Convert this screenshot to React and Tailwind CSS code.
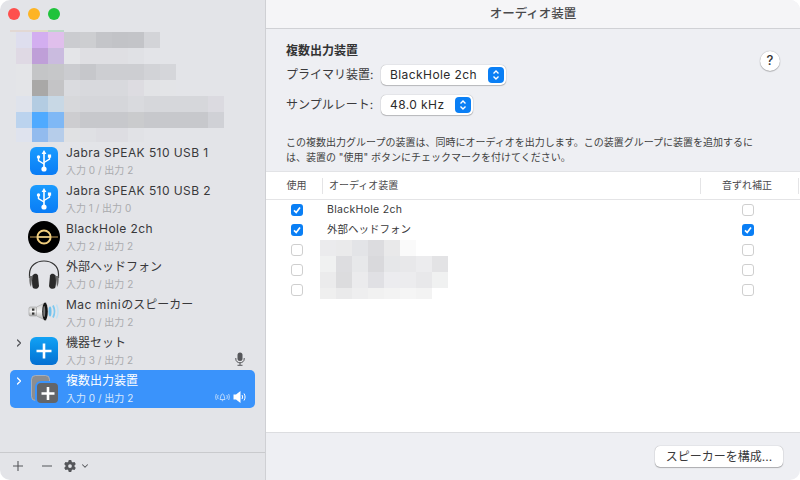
import React from "react";
import { FaGear } from "react-icons/fa6";
import { ChevronDown, ChevronRight } from "lucide-react";

const FONT = "font-['Inter','Noto_Sans_CJK_JP',sans-serif]";

// pixelated (blurred out) blocks in the reference, one class per 16px cell
const sideMosaic = [
  ["bg-[#dedeee]", "bg-[#d3aef0]", "bg-[#e0bfec]", "bg-[#cbccd0]", "bg-[#cdced1]", "bg-[#c4c5c9]", "bg-[#c2c3c7]", "bg-[#c3c4c8]", "bg-[#d3d4d8]"],
  ["bg-[#dfd9e4]", "bg-[#bf9fd8]", "bg-[#cabbdf]", "bg-[#e4e5e8]", "bg-[#dfdfe3]", "bg-[#dfdfe3]", "bg-[#dfdfe3]", "bg-[#e0e1e5]"],
  ["bg-[#e4e5e8]", "bg-[#c4c5c7]", "bg-[#c6c7c9]", "bg-[#cbccd0]", "bg-[#c6c7cb]", "bg-[#cdced2]", "bg-[#cdced2]", "bg-[#cdced2]", "bg-[#d2d3d7]", "bg-[#d5d6da]"],
  ["bg-[#e4e5e8]", "bg-[#a9a8a7]", "bg-[#c4c4c6]", "bg-[#dadbdf]", "bg-[#d8d9dd]", "bg-[#d8d9dd]", "bg-[#d8d9dd]", "bg-[#dddce1]", "bg-[#e2e3e6]", "bg-[#e3e4e7]"],
  ["bg-[#dfe3ec]", "bg-[#b3cce2]", "bg-[#c8d8e5]", "bg-[#d7d8db]", "bg-[#d5d6da]", "bg-[#d5d6da]", "bg-[#d5d6da]", "bg-[#d9dade]", "bg-[#d6d7db]", "bg-[#d6d7db]", "bg-[#d6d7db]", "bg-[#d6d7db]", "bg-[#dbdae0]"],
  ["bg-[#bbd3ee]", "bg-[#4faaff]", "bg-[#7fb8f5]", "bg-[#cdcdd0]", "bg-[#c7c8cc]", "bg-[#c7c8cc]", "bg-[#c7c8cc]", "bg-[#cacbcd]", "bg-[#c7c8cc]", "bg-[#c7c8cc]", "bg-[#c7c8cc]", "bg-[#c7c8cc]", "bg-[#d0d1d6]"],
  ["bg-[#dfe3ee]", "bg-[#92bbee]", "bg-[#b6cdea]", "bg-[#e0e1e3]", "bg-[#dfe0e4]", "bg-[#dddde2]", "bg-[#dddde2]", "bg-[#e1e2e6]"],
];

const tableMosaic = [
  ["bg-[#ebebed]", "bg-[#eaeaeb]", "bg-[#e3e4e7]", "bg-[#dcdcdf]", "bg-[#e9e9ea]", "bg-[#fafafa]"],
  ["bg-[#f0f1f1]", "bg-[#dddde0]", "bg-[#e7e8ea]", "bg-[#d9d9dc]", "bg-[#e6e7e9]", "bg-[#e8e8ea]", "bg-[#ececee]", "bg-[#e3e3e5]"],
  ["bg-[#ebebec]", "bg-[#dcdcde]", "bg-[#ebebed]", "bg-[#e0e0e4]", "bg-[#ececef]", "bg-[#ececee]", "bg-[#e8e8ea]", "bg-[#f0f1f1]"],
  ["bg-[#efefef]", "bg-[#eaeaeb]", "bg-[#eeeeef]", "bg-[#f1f1f1]", "bg-[#f3f3f3]", "bg-[#f5f5f5]", "bg-[#f3f3f3]"],
];

const UsbIcon = () => (
  <div className="w-[28px] h-[28px] rounded-[6px] bg-gradient-to-b from-[#1a9bff] to-[#0a7cf5] flex items-center justify-center">
    <svg width="18" height="24" viewBox="0 0 18 24" fill="none">
      <path d="M9 1 L11.4 5 H6.6 Z" fill="#fff" />
      <path d="M9 4 V20" stroke="#fff" strokeWidth="1.6" />
      <circle cx="9" cy="20" r="2.6" fill="#fff" />
      <path d="M3.5 9 V11.5 L9 15" stroke="#fff" strokeWidth="1.4" />
      <path d="M14.5 8 V10 L9 13.5" stroke="#fff" strokeWidth="1.4" />
      <circle cx="3.5" cy="8" r="1.7" fill="#fff" />
      <rect x="12.9" y="5.5" width="3.2" height="3.2" fill="#fff" />
    </svg>
  </div>
);

const BlackHoleIcon = () => (
  <svg width="32" height="32" viewBox="0 0 32 32">
    <circle cx="16" cy="16" r="16" fill="#000" />
    <circle cx="16" cy="16" r="6.6" fill="none" stroke="#f2cf7e" strokeWidth="2" />
    <path d="M2 16 H30" stroke="#c9a35c" strokeWidth="1" />
    <path d="M9 16 H23" stroke="#f6d88e" strokeWidth="1.6" />
  </svg>
);

const HeadphonesIcon = () => (
  <svg width="32" height="30" viewBox="0 0 32 30" fill="none">
    <path d="M1.500 18 V14 C1.500 6 8 1 16 1 C24 1 30.500 6 30.500 14 V18" stroke="#333" strokeWidth="1.200" />
    <path d="M1.500 16 C1 20 1.500 25 3 27 L4.500 16 Z" fill="#6a6a6a" />
    <path d="M30.500 16 C31 20 30.500 25 29 27 L27.500 16 Z" fill="#6a6a6a" />
    <path d="M4.500 15.500 C6 13.500 9 13 10 15.500 L11 26 C10.500 29 6.500 29.500 5 28 C3.800 26 3.800 20 4.500 15.500 Z" fill="#2a2a2a" />
    <path d="M27.500 15.500 C26 13.500 23 13 22 15.500 L21 26 C21.500 29 25.500 29.500 27 28 C28.200 26 28.200 20 27.500 15.500 Z" fill="#2a2a2a" />
  </svg>
);

const SpeakerIcon = () => (
  <svg width="32" height="20" viewBox="0 0 32 20" fill="none" className="mb-[2px]">
    <defs>
      <linearGradient id="spk" x1="0" y1="0" x2="0" y2="1">
        <stop offset="0" stopColor="#c9c9c9" />
        <stop offset="0.5" stopColor="#f4f4f4" />
        <stop offset="1" stopColor="#a8a8a8" />
      </linearGradient>
    </defs>
    <rect x="1" y="5" width="8" height="9" rx="1.500" fill="url(#spk)" stroke="#9c9c9c" strokeWidth="0.6" />
    <rect x="4" y="6.500" width="2.400" height="2.200" fill="#333" />
    <rect x="4" y="10.500" width="2.400" height="2.200" fill="#333" />
    <path d="M8.500 5 L18 0.500 V18.500 L8.500 14 Z" fill="url(#spk)" stroke="#9c9c9c" strokeWidth="0.5" />
    <ellipse cx="17" cy="9.500" rx="2.800" ry="9" fill="#151515" />
    <ellipse cx="16.200" cy="9.500" rx="1" ry="5.500" fill="#7a7a7a" />
    <ellipse cx="22" cy="9.500" rx="1.500" ry="5" fill="#6fc0ec" />
    <path d="M25 3.500 C26.800 7 26.800 12 25 15.500" stroke="#7fc9f0" strokeWidth="1.800" />
    <path d="M28.500 2.500 C30.500 7 30.500 12 28.500 16.500" stroke="#bfe2f5" strokeWidth="1.500" />
  </svg>
);

const PlusTile = () => (
  <div className="w-[28px] h-[28px] rounded-[6px] bg-gradient-to-b from-[#12a2f5] to-[#0670d2] flex items-center justify-center">
    <svg width="18" height="18" viewBox="0 0 18 18">
      <path d="M9 1.500 V16.500 M1.500 9 H16.500" stroke="#fff" strokeWidth="2.6" />
    </svg>
  </div>
);

const MultiTile = () => (
  <svg width="30" height="30" viewBox="0 0 30 30">
    <rect x="2.500" y="1.500" width="18" height="25" rx="4" fill="#8b8d90" stroke="#b4b7bd" strokeWidth="0.8" />
    <rect x="7" y="8" width="23" height="22" rx="5" fill="#636568" stroke="#3a93fb" strokeWidth="2" />
    <path d="M19 13 V26 M12.500 19.500 H25.500" stroke="#fff" strokeWidth="2.600" />
  </svg>
);

const MicIcon = () => (
  <svg width="10" height="14" viewBox="0 0 10 14" fill="none">
    <rect x="2.500" y="0.500" width="5" height="8.500" rx="2.500" fill="#55565a" />
    <path d="M0.800 6 V7 C0.800 9.300 2.700 10.800 5 10.800 C7.300 10.800 9.200 9.300 9.200 7 V6 M5 10.800 V13 M2.500 13.300 H7.500" stroke="#55565a" strokeWidth="1" />
  </svg>
);

const AlertOutIcon = () => (
  <svg width="15" height="10" viewBox="0 0 14 10" fill="none" stroke="#fff" strokeWidth="0.8" opacity="0.8">
    <path d="M4.500 7.500 C5.200 6.500 5 2 7 2 C9 2 8.800 6.500 9.500 7.500 Z" />
    <path d="M6.300 8.700 H7.700" />
    <path d="M2.700 3 C2 4.500 2 5.500 2.700 7 M0.900 2 C0 4 0 6 0.900 8 M11.300 3 C12 4.500 12 5.500 11.300 7 M13.100 2 C14 4 14 6 13.100 8" />
  </svg>
);

const VolumeIcon = () => (
  <svg width="13" height="12" viewBox="0 0 13 12" fill="none">
    <path d="M0.500 3.500 H3 L7.500 0 V12 L3 8.500 H0.500 Z" fill="#fff" />
    <path d="M9 4 C9.700 5.300 9.700 6.700 9 8 M11 2.500 C12.400 4.500 12.400 7.500 11 9.500" stroke="#fff" strokeWidth="1" />
  </svg>
);

const devices = [
  { id: "usb1", name: <span className="tracking-[0.42px]">Jabra SPEAK 510 USB 1</span>, sub: "入力 0 / 出力 2", icon: <UsbIcon /> },
  { id: "usb2", name: <span className="tracking-[0.42px]">Jabra SPEAK 510 USB 2</span>, sub: "入力 1 / 出力 0", icon: <UsbIcon /> },
  { id: "bh", name: <span className="tracking-[0.42px]">BlackHole 2ch</span>, sub: "入力 2 / 出力 2", icon: <BlackHoleIcon /> },
  { id: "hp", name: "外部ヘッドフォン", sub: "入力 0 / 出力 2", icon: <HeadphonesIcon /> },
  { id: "mac", name: <><span className="tracking-[0.5px]">Mac mini</span>のスピーカー</>, sub: "入力 0 / 出力 2", icon: <SpeakerIcon /> },
  { id: "set", name: "機器セット", sub: "入力 3 / 出力 2", icon: <PlusTile />, arrow: true, mic: true },
  { id: "multi", name: "複数出力装置", sub: "入力 0 / 出力 2", icon: <MultiTile />, arrow: true, selected: true },
];

const tableRows = [
  { name: <span className="tracking-[0.3px]">BlackHole 2ch</span>, use: true, drift: false },
  { name: "外部ヘッドフォン", use: true, drift: true },
  { name: "", use: false, drift: false },
  { name: "", use: false, drift: false },
  { name: "", use: false, drift: false },
];

const Check = ({ on }) =>
  on ? (
    <div className="w-[12px] h-[12px] rounded-[3px] bg-[#0a7ff5] flex items-center justify-center">
      <svg width="10" height="10" viewBox="0 0 10 10" fill="none">
        <path d="M2 5.300 L4.200 7.500 L8 2.500" stroke="#fff" strokeWidth="1.700" />
      </svg>
    </div>
  ) : (
    <div className="w-[12px] h-[12px] rounded-[3px] bg-white border border-[#cfcfcf]" />
  );

const Stepper = () => (
  <div className="w-[16px] h-[16px] rounded-[4px] bg-[#0a7ff5] flex items-center justify-center">
    <svg width="10" height="12" viewBox="0 0 10 12" fill="none">
      <path d="M2.500 4.500 L5 2 L7.500 4.500 M2.500 7.500 L5 10 L7.500 7.500" stroke="#fff" strokeWidth="1.400" />
    </svg>
  </div>
);

const Select = ({ value, width }) => (
  <div className={`${width} h-[20px] rounded-[5px] bg-white shadow-[0_0_1px_rgba(0,0,0,0.4),0_1px_1px_rgba(0,0,0,0.2)] flex items-center justify-between pl-[9px] pr-[2px] text-[12px] tracking-[0.42px] text-[#2b2b2b]`}>
    {value}
    <Stepper />
  </div>
);

const DeviceRow = ({ d }) => (
  <div className={`relative h-[38px] mx-[10px] rounded-[5px] flex items-center ${d.selected ? "bg-[#3a93fb]" : ""}`}>
    {d.arrow && (
      <div className="absolute left-[3px] top-[5px]">
        <ChevronRight size={12} strokeWidth={2.500} className={d.selected ? "text-white" : "text-[#55565a]"} />
      </div>
    )}
    <div className="ml-[18px] w-[32px] h-[32px] flex items-center justify-center">{d.icon}</div>
    <div className="ml-[6px] flex-1 flex flex-col">
      <span className={`text-[12px] leading-[20px] whitespace-nowrap ${d.selected ? "text-white" : "text-[#38383a]"}`}>{d.name}</span>
      <span className={`text-[10px] leading-[14px] mb-[2px] whitespace-nowrap ${d.selected ? "text-[#dbe9fc]" : "text-[#aaabae]"}`}>{d.sub}</span>
    </div>
    {d.mic && (
      <div className="absolute right-[10px] bottom-[4px]">
        <MicIcon />
      </div>
    )}
    {d.selected && (
      <div className="absolute right-[9px] bottom-[5px] flex items-center gap-[3px]">
        <AlertOutIcon />
        <VolumeIcon />
      </div>
    )}
  </div>
);

export default function App() {
  return (
    <div className={`${FONT} w-[800px] h-[480px] bg-white overflow-hidden`}>
      <div className="w-full h-full rounded-[10px] overflow-hidden flex">
        {/* sidebar */}
        <aside className="w-[266px] h-full bg-[#e3e4e8] border-r border-[#cfd0d4] flex flex-col">
          <div className="h-[28px] flex items-center gap-[8px] pl-[8px]">
            <span className="w-[12px] h-[12px] rounded-full bg-[#fe4f4d]" />
            <span className="w-[12px] h-[12px] rounded-full bg-[#fdb424]" />
            <span className="w-[12px] h-[12px] rounded-full bg-[#1fc33b]" />
          </div>
          <div className="h-[114px] pt-[2px] pl-[16px] overflow-hidden">
            <div className="flex h-[2px] -ml-[6px]">
              <div className="w-[22px] bg-[#e2d8d4]" />
              <div className="w-[16px] bg-[#dfdcc8]" />
              <div className="w-[16px] bg-[#bcd9c8]" />
            </div>
            {sideMosaic.map((row, i) => (
              <div key={i} className="flex h-[16px]">
                {row.map((c, j) => (
                  <div key={j} className={`w-[16px] h-[16px] ${c}`} />
                ))}
              </div>
            ))}
          </div>
          <div className="flex-1">
            {devices.map((d) => (
              <DeviceRow key={d.id} d={d} />
            ))}
          </div>
          <div className="h-[28px] border-t border-[#c9cacd] flex items-center pl-[12px] pb-[1px] text-[#55565a]">
            <svg width="12" height="12" viewBox="0 0 12 12"><path d="M6 1 V11 M1 6 H11" stroke="#55565a" strokeWidth="1.100" /></svg>
            <svg className="ml-[17px]" width="12" height="12" viewBox="0 0 12 12"><path d="M1 6 H11" stroke="#55565a" strokeWidth="1.100" /></svg>
            <FaGear size={12} className="ml-[11px]" />
            <ChevronDown size={10} strokeWidth={2.500} className="ml-[4px]" />
          </div>
        </aside>

        {/* main panel */}
        <main className="flex-1 h-full bg-[#eeeff3] flex flex-col">
          <div className="h-[29px] bg-[#f5f5f7] border-b border-[#d0d1d5] flex items-center justify-center text-[12.500px] font-medium text-[#4a4a4c]">
            オーディオ装置
          </div>
          <div className="relative h-[142px] pl-[20px] pt-[15px] text-[#3a3a3c]">
            <div className="text-[12px] leading-[14px] font-bold text-[#333]">複数出力装置</div>
            <div className="mt-[7px] flex items-center gap-[8px] text-[12px]">
              <span className="w-[87px] whitespace-nowrap">プライマリ装置:</span>
              <Select value="BlackHole 2ch" width="w-[125px]" />
            </div>
            <div className="mt-[10px] flex items-center gap-[8px] text-[12px]">
              <span className="w-[87px] whitespace-nowrap">サンプルレート:</span>
              <Select value="48.0 kHz" width="w-[92px]" />
            </div>
            <p className="mt-[20px] text-[10px] leading-[15px] text-[#3f3f41] whitespace-nowrap">
              この複数出力グループの装置は、同時にオーディオを出力します。この装置グループに装置を追加するに<br />
              は、装置の "使用" ボタンにチェックマークを付けてください。
            </p>
            <div className="absolute right-[20px] top-[22px] w-[20px] h-[20px] rounded-full bg-white shadow-[0_0_1px_rgba(0,0,0,0.4),0_1px_1px_rgba(0,0,0,0.2)] flex items-center justify-center text-[13px] font-medium text-[#333]">
              ?
            </div>
          </div>

          {/* table */}
          <div className="relative flex-1 bg-white border-t border-[#e2e3e6]">
            <div className="h-[28px] border-b border-[#e4e4e6] flex items-center text-[10px] text-[#4a4a4c]">
              <div className="w-[57px] h-[16px] flex items-center justify-center pl-[5px] border-r border-[#e4e4e6]">使用</div>
              <div className="flex-1 h-[16px] flex items-center pl-[6px] border-r border-[#e4e4e6]">オーディオ装置</div>
              <div className="w-[98px] h-[16px] flex items-center justify-center pr-[5px] border-r border-[#e4e4e6] mr-[1px]">音ずれ補正</div>
            </div>
            {tableRows.map((r, i) => (
              <div key={i} className="h-[20px] flex items-center text-[10.500px] text-[#38383a]">
                <div className="w-[57px] flex justify-center pl-[5px]"><Check on={r.use} /></div>
                <div className="flex-1 pl-[4px]">{r.name}</div>
                <div className="w-[98px] flex justify-center pr-[6px]"><Check on={r.drift} /></div>
              </div>
            ))}
            <div className="absolute left-[54px] top-[68px]">
              {tableMosaic.map((row, i) => (
                <div key={i} className={`flex ${i === 3 ? "h-[11px]" : "h-[16px]"}`}>
                  {row.map((c, j) => (
                    <div key={j} className={`w-[16px] h-full ${c}`} />
                  ))}
                </div>
              ))}
            </div>
          </div>

          <div className="h-[48px] border-t border-[#dcdde0] flex items-center justify-end pr-[17px]">
            <div className="w-[128px] h-[21px] rounded-[5px] bg-white shadow-[0_0_1px_rgba(0,0,0,0.4),0_1px_1px_rgba(0,0,0,0.25)] flex items-center justify-center text-[12px] text-[#3a3a3c]">
              スピーカーを構成...
            </div>
          </div>
        </main>
      </div>
    </div>
  );
}
